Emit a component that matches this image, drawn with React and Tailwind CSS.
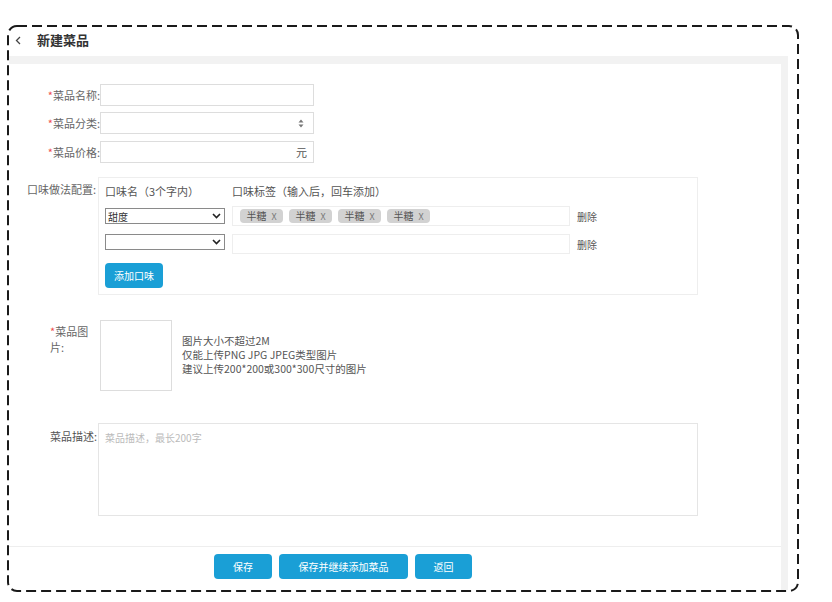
import React from "react";

const font = { fontFamily: '"Noto Sans CJK SC", "Noto Sans", sans-serif' };

function Star() {
  return <span className="text-[#f05050]">*</span>;
}

function ChevronDown() {
  return (
    <svg width="9" height="6" viewBox="0 0 9 6" className="shrink-0">
      <path d="M1 1 L4.5 4.5 L8 1" fill="none" stroke="#222" strokeWidth="1.6" />
    </svg>
  );
}

function Tag() {
  return (
    <div className="flex h-[14px] w-[43px] items-center justify-center gap-[5px] rounded-[4px] bg-[#d2d2d2] text-[10px] leading-none text-[#555]">
      <span>半糖</span>
      <span className="text-[9px] text-[#777]">X</span>
    </div>
  );
}

function Btn({ w, children }) {
  return (
    <div
      className={`flex h-[25px] ${w} items-center justify-center rounded-[4px] bg-[#1a9fd6] text-[10px] text-white`}
    >
      {children}
    </div>
  );
}

export default function App() {
  return (
    <div className="h-[602px] w-[832px] bg-white text-[11px] text-[#666]" style={font}>
      <div className="pt-[25px] pl-[7px]">
        <div className="relative flex h-[567px] w-[792px] flex-col p-[2px]">
          <svg
            className="pointer-events-none absolute inset-0 z-10"
            width="792"
            height="567"
            viewBox="0 0 792 567"
          >
            <rect
              x="1"
              y="1"
              width="790"
              height="565"
              rx="9"
              fill="none"
              stroke="#1a1a1a"
              strokeWidth="2"
              strokeDasharray="10 5"
            />
          </svg>
          {/* header */}
          <div className="flex h-[29px] shrink-0 items-center pb-[3px]">
            <svg width="6" height="9" viewBox="0 0 6 9" className="ml-[6px]">
              <path d="M5 1 L1.5 4.5 L5 8" fill="none" stroke="#444" strokeWidth="1.3" />
            </svg>
            <span className="ml-[16px] text-[13px] font-bold text-[#333]">新建菜品</span>
          </div>
          {/* body */}
          <div className="flex min-h-0 flex-1 flex-col pr-[9px]">
            <div className="flex min-h-0 flex-1 flex-col bg-[#f2f2f2] pt-[8px] pr-[7px]">
              <div className="flex min-h-0 flex-1 flex-col bg-white">
                <div className="flex flex-1 flex-col pt-[20px]">
                  {/* name */}
                  <div className="flex h-[22px] items-center">
                    <div className="w-[91px] text-right">
                      <Star />
                      菜品名称:
                    </div>
                    <div className="h-[22px] w-[214px] border border-[#dddddd]" />
                  </div>
                  {/* category */}
                  <div className="mt-[6px] flex h-[22px] items-center">
                    <div className="w-[91px] text-right">
                      <Star />
                      菜品分类:
                    </div>
                    <div className="flex h-[22px] w-[214px] items-center justify-end border border-[#dddddd] pr-[9px]">
                      <svg width="6" height="9" viewBox="0 0 6 9">
                        <path d="M3 0.5 L5.5 3.5 L0.5 3.5 Z M3 8.5 L5.5 5.5 L0.5 5.5 Z" fill="#777" />
                      </svg>
                    </div>
                  </div>
                  {/* price */}
                  <div className="mt-[7px] flex h-[22px] items-center">
                    <div className="w-[91px] text-right">
                      <Star />
                      菜品价格:
                    </div>
                    <div className="flex h-[22px] w-[214px] items-center justify-end border border-[#dddddd] pr-[6px] text-[#555]">
                      元
                    </div>
                  </div>
                  {/* flavour */}
                  <div className="mt-[14px] flex items-start">
                    <div className="w-[87px] pt-[4px] text-right">口味做法配置:</div>
                    <div className="ml-[2px] flex h-[118px] w-[600px] flex-col border border-[#eeeeee] pl-[6px]">
                      <div className="flex h-[26px] items-center text-[#555]">
                        <span className="w-[127px]">口味名（3个字内）</span>
                        <span>口味标签（输入后，回车添加）</span>
                      </div>
                      <div className="mt-[2px] flex h-[20px] items-center">
                        <div className="flex h-[16px] w-[120px] items-center justify-between border border-[#8a8a8a] pr-[3px] pl-[2px] text-[10px] text-[#333]">
                          <span>甜度</span>
                          <ChevronDown />
                        </div>
                        <div className="ml-[7px] flex h-[20px] w-[338px] items-center gap-[6px] border border-[#eeeeee] pl-[7px]">
                          <Tag />
                          <Tag />
                          <Tag />
                          <Tag />
                        </div>
                        <span className="ml-[7px] text-[10px] text-[#555]">删除</span>
                      </div>
                      <div className="mt-[8px] flex h-[20px] items-start">
                        <div className="flex h-[16px] w-[120px] items-center justify-end border border-[#8a8a8a] pr-[3px]">
                          <ChevronDown />
                        </div>
                        <div className="ml-[7px] h-[20px] w-[338px] border border-[#eeeeee]" />
                        <span className="ml-[7px] self-center text-[10px] text-[#555]">删除</span>
                      </div>
                      <div className="mt-[9px]">
                        <Btn w="w-[58px]">添加口味</Btn>
                      </div>
                    </div>
                  </div>
                  {/* picture */}
                  <div className="mt-[25px] flex items-start">
                    <div className="ml-[41px] w-[44px] pt-[3px] leading-[16px]">
                      <div>
                        <Star />
                        菜品图
                      </div>
                      <div>片:</div>
                    </div>
                    <div className="ml-[6px] h-[71px] w-[72px] border border-[#dddddd]" />
                    <div className="ml-[10px] pt-[14px] text-[10.5px] leading-[14px] text-[#555]">
                      <div>图片大小不超过2M</div>
                      <div>仅能上传PNG JPG JPEG类型图片</div>
                      <div>建议上传200*200或300*300尺寸的图片</div>
                    </div>
                  </div>
                  {/* description */}
                  <div className="mt-[32px] flex items-start">
                    <div className="w-[89px] pt-[5px] pl-[41px] text-[#555]">菜品描述:</div>
                    <div className="h-[93px] w-[600px] border border-[#e5e5e5] pt-[6px] pl-[6px] text-[10px] text-[#bbbbbb]">
                      菜品描述，最长200字
                    </div>
                  </div>
                </div>
                {/* footer */}
                <div className="flex h-[44px] shrink-0 gap-[7px] border-t border-[#eeeeee] pt-[7px] pl-[205px]">
                  <Btn w="w-[58px]">保存</Btn>
                  <Btn w="w-[129px]">保存并继续添加菜品</Btn>
                  <Btn w="w-[57px]">返回</Btn>
                </div>
              </div>
            </div>
          </div>
        </div>
      </div>
    </div>
  );
}
